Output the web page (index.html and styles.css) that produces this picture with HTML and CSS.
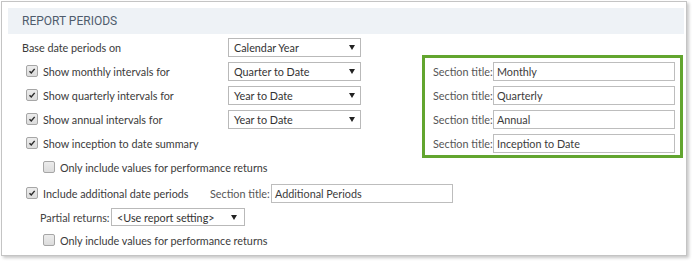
FILE: index.html
```html
<!DOCTYPE html>
<html>
<head>
<meta charset="utf-8">
<link rel="stylesheet" href="styles.css">
</head>
<body>
<div class="panel">
  <div class="head">REPORT PERIODS</div>
  <div class="grid">
    <div class="cell lbl">Base date periods on</div>
    <div class="cell"><div class="sel">Calendar Year<span class="arr"></span></div></div>

    <div class="cell lbl chk"><span class="cb on"><svg viewBox="0 0 12 12"><path d="M3 6.2 L5.1 8.4 L9.2 3.4"/></svg></span>Show monthly intervals for</div>
    <div class="cell"><div class="sel">Quarter to Date<span class="arr"></span></div></div>

    <div class="cell lbl chk"><span class="cb on"><svg viewBox="0 0 12 12"><path d="M3 6.2 L5.1 8.4 L9.2 3.4"/></svg></span>Show quarterly intervals for</div>
    <div class="cell"><div class="sel">Year to Date<span class="arr"></span></div></div>

    <div class="cell lbl chk"><span class="cb on"><svg viewBox="0 0 12 12"><path d="M3 6.2 L5.1 8.4 L9.2 3.4"/></svg></span>Show annual intervals for</div>
    <div class="cell"><div class="sel">Year to Date<span class="arr"></span></div></div>

    <div class="cell lbl chk wide"><span class="cb on"><svg viewBox="0 0 12 12"><path d="M3 6.2 L5.1 8.4 L9.2 3.4"/></svg></span>Show inception to date summary</div>

    <div class="green">
      <div class="trow"><span class="tl">Section title:</span><div class="inp">Monthly</div></div>
      <div class="trow"><span class="tl">Section title:</span><div class="inp">Quarterly</div></div>
      <div class="trow"><span class="tl">Section title:</span><div class="inp">Annual</div></div>
      <div class="trow"><span class="tl">Section title:</span><div class="inp">Inception to Date</div></div>
    </div>
  </div>
  <div class="rows">
    <div class="row r6 sub"><span class="cb"></span>Only include values for performance returns</div>
    <div class="row r7"><span class="cb on"><svg viewBox="0 0 12 12"><path d="M3 6.2 L5.1 8.4 L9.2 3.4"/></svg></span><span class="addl">Include additional date periods</span><span class="tl">Section title:</span><div class="inp inp2">Additional Periods</div></div>
    <div class="row r8"><span class="pl">Partial returns:</span><div class="sel sel2">&lt;Use report setting&gt;<span class="arr"></span></div></div>
    <div class="row r9 sub"><span class="cb"></span>Only include values for performance returns</div>
  </div>
</div>
</body>
</html>
```
FILE: styles.css
```css
* { box-sizing: border-box; }
html, body { margin: 0; padding: 0; background: #fff; }
body {
  font-family: "Lato", "Open Sans", sans-serif;
  font-size: 10.8px;
  color: #3b3b3b;
  width: 697px;
  height: 265px;
  overflow: hidden;
  white-space: nowrap;
}
.panel {
  margin: 1px 0 0 1px;
  width: 686px;
  height: 255px;
  border: 1px solid #c4c4c4;
  padding: 6px 2px 0 6px;
  box-shadow: 2px 2px 3px rgba(0,0,0,0.22);
}
.head {
  height: 26px;
  background: #eef2f6;
  padding-left: 14px;
  display: flex;
  align-items: center;
  font-family: "Roboto", "Lato", sans-serif;
  font-size: 12px;
  color: #4e5c6d;
}
.grid {
  margin-top: 1px;
  padding-left: 14px;
  display: grid;
  grid-template-columns: 206px 133px 61px 261px;
  grid-template-rows: repeat(5, 24px);
}
.cell { display: flex; align-items: center; }
.lbl { grid-column: 1; }
.wide { grid-column: 1 / span 3; }
.chk { padding-left: 4px; }
.cb {
  width: 12px;
  height: 12px;
  border: 1px solid #a6a6a6;
  border-radius: 2px;
  background: linear-gradient(#ececec, #dcdcdc);
  margin-right: 5px;
  flex: none;
  display: inline-flex;
}
.cb svg { width: 10px; height: 10px; }
.cb path { fill: none; stroke: #2a2a2a; stroke-width: 1.7; }
.sel {
  position: relative;
  width: 133px;
  height: 19px;
  border: 1px solid #b9b9b9;
  background: #fff;
  padding-left: 5px;
  display: flex;
  align-items: center;
  color: #333;
}
.arr {
  position: absolute;
  right: 5px;
  top: 6px;
  width: 0;
  height: 0;
  border-left: 3px solid transparent;
  border-right: 3px solid transparent;
  border-top: 5px solid #222;
}
.green {
  grid-column: 4;
  grid-row: 2 / 6;
  margin: -4px 0 -3px;
  border: 3px solid #62a52f;
  padding: 1px 0 0 8px;
}
.trow {
  height: 24px;
  display: flex;
  align-items: center;
}
.tl { color: #555; width: 60px; flex: none; }
.inp {
  width: 182px;
  height: 19px;
  border: 1px solid #bdbdbd;
  padding-left: 3px;
  display: flex;
  align-items: center;
  color: #3b3b3b;
}
.rows { padding-left: 14px; }
.row { display: flex; align-items: center; }
.r6 { height: 24px; }
.r7 { height: 28px; padding-left: 4px; }
.r8 { height: 20px; padding-left: 18px; }
.r9 { height: 26px; }
.sub { padding-left: 21px; }
.addl { width: 167px; flex: none; }
.inp2 { margin-left: 1px; }
.pl { width: 71px; flex: none; color: #444; }
.sel2 { width: 134px; height: 18px; }
.sel2 .arr { right: 7px; top: 6px; }
```
